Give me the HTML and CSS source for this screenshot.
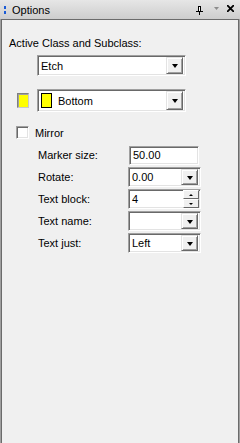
FILE: index.html
```html
<!DOCTYPE html>
<html>
<head lang="en">
    <meta charset="utf-8">
    <title>Options</title>
    <link rel="stylesheet" href="styles.css">
</head>
<body>
<div class="panel">
    <div class="titlebar">
        <span class="grip"><i></i><i></i></span>
        <span class="title">Options</span>
        <span class="tools">
            <svg width="7" height="9" viewBox="0 0 7 9"><path d="M2 0h3v5H2zM0 5h7v1H0zM3 6h1v3H3z" fill="#000"/><path d="M3 1h1v4H3z" fill="#fff"/></svg>
            <svg width="5" height="3" viewBox="0 0 5 3"><path d="M0 0h5L2.5 3z" fill="#8c8c8c"/></svg>
            <svg width="7" height="7" viewBox="0 0 7 7"><path d="M0 0l7 7M7 0L0 7" stroke="#000" stroke-width="1.8"/></svg>
        </span>
    </div>
    <div class="frame">
        <div class="content">
            <div class="heading">Active Class and Subclass:</div>

            <div class="combo class-combo">
                <span class="value">Etch</span>
                <span class="dropbtn"><b></b></span>
            </div>

            <div class="subclass-row">
                <span class="swatch-btn"><span></span></span>
                <div class="combo subclass-combo">
                    <span class="chip"></span>
                    <span class="value">Bottom</span>
                    <span class="dropbtn"><b></b></span>
                </div>
            </div>

            <label class="check-row">
                <span class="checkbox"></span>
                <span>Mirror</span>
            </label>

            <div class="fields">
                <span class="lbl">Marker size:</span>
                <div class="edit marker"><span class="value">50.00</span></div>

                <span class="lbl">Rotate:</span>
                <div class="combo small"><span class="value">0.00</span><span class="dropbtn"><b></b></span></div>

                <span class="lbl">Text block:</span>
                <div class="combo small spin">
                    <span class="value">4</span>
                    <span class="spinbtns"><span class="up"><b></b></span><span class="down"><b></b></span></span>
                </div>

                <span class="lbl">Text name:</span>
                <div class="combo small"><span class="value"></span><span class="dropbtn"><b></b></span></div>

                <span class="lbl">Text just:</span>
                <div class="combo small"><span class="value">Left</span><span class="dropbtn"><b></b></span></div>
            </div>
        </div>
    </div>
</div>
</body>
</html>
```

FILE: styles.css
```css
html, body {
    margin: 0;
    padding: 0;
}

body {
    width: 240px;
    height: 443px;
    overflow: hidden;
    background: #f0f0f0;
    font-family: "Liberation Sans", Arial, sans-serif;
    font-size: 11px;
    color: #000;
}

.panel {
    display: flex;
    flex-direction: column;
    height: 443px;
}

.titlebar {
    height: 19px;
    display: flex;
    align-items: center;
    background: linear-gradient(#e6e6e6, #cdcdcd);
    flex-shrink: 0;
}

.grip {
    display: flex;
    flex-direction: column;
    gap: 2px;
    margin-left: 4px;
    width: 2px;
}

.grip i {
    display: block;
    width: 2px;
    height: 3px;
    background: #1a5bd6;
}

.title {
    margin-left: 6px;
    font-size: 11px;
    flex: 1;
}

.tools {
    display: flex;
    align-items: center;
    margin-right: 6px;
}

.tools svg:nth-child(1) {
    margin-right: 11px;
    margin-top: 2px;
}

.tools svg:nth-child(2) {
    margin-right: 8px;
    margin-top: -3px;
}

.tools svg:nth-child(3) {
    margin-top: -3px;
}

.frame {
    flex: 1;
    border-left: 1px solid #a0a0a0;
    border-right: 1px solid #a0a0a0;
    display: flex;
}

.content {
    flex: 1;
    border: 1px solid #6b6b6b;
    border-bottom: none;
    padding: 17px 0 0 7px;
    background: #f0f0f0;
}

.heading {
    line-height: 13px;
}

/* sunken field */
.combo, .edit {
    box-sizing: border-box;
    display: flex;
    align-items: center;
    background: #fff;
    border: 1px solid;
    border-color: #a0a0a0 #fff #fff #a0a0a0;
    box-shadow: inset 1px 1px #696969, inset -1px -1px #e3e3e3;
}

.combo .value, .edit .value {
    flex: 1;
    padding-left: 3px;
    white-space: nowrap;
}

.dropbtn {
    box-sizing: border-box;
    width: 17px;
    height: 17px;
    margin-right: 2px;
    background: #f0f0f0;
    border: 1px solid;
    border-color: #e3e3e3 #696969 #696969 #e3e3e3;
    box-shadow: inset 1px 1px #fff, inset -1px -1px #a0a0a0;
    display: flex;
    align-items: center;
    justify-content: center;
}

.dropbtn b {
    width: 0;
    height: 0;
    border-left: 3.5px solid transparent;
    border-right: 3.5px solid transparent;
    border-top: 4px solid #000;
    margin-top: 1px;
}

.class-combo {
    width: 149px;
    height: 21px;
    margin: 5px 0 0 28px;
}

.subclass-row {
    display: flex;
    align-items: center;
    margin-top: 13px;
}

.swatch-btn {
    box-sizing: border-box;
    width: 12px;
    height: 15px;
    margin-left: 8px;
    margin-right: 8px;
    border: 1px solid;
    border-color: #808080 #c8c8c8 #c8c8c8 #808080;
    background: #a0a0a0;
    padding: 1px 0 0 1px;
    display: flex;
}

.swatch-btn span {
    flex: 1;
    background: #ffff00;
}

.subclass-combo {
    width: 149px;
    height: 23px;
}

.subclass-combo .chip {
    width: 9px;
    height: 13px;
    margin-left: 3px;
    border: 1px solid #000;
    background: #ffff00;
    flex-shrink: 0;
}

.subclass-combo .value {
    padding-left: 6px;
}

.subclass-combo .dropbtn {
    height: 19px;
}

.check-row {
    display: flex;
    align-items: center;
    margin: 14px 0 0 7px;
    gap: 6px;
}

.checkbox {
    box-sizing: border-box;
    width: 13px;
    height: 13px;
    background: #fff;
    border: 1px solid;
    border-color: #a0a0a0 #fff #fff #a0a0a0;
    box-shadow: inset 1px 1px #696969, inset -1px -1px #e3e3e3;
}

.fields {
    display: grid;
    grid-template-columns: 90px 73px;
    grid-auto-rows: 20px;
    row-gap: 2px;
    align-items: center;
    margin: 6px 0 0 29px;
}

.combo.small {
    height: 20px;
}

.combo.small .dropbtn {
    height: 16px;
}

.edit.marker {
    width: 70px;
    height: 19px;
    margin-left: 1px;
}

.spinbtns {
    display: flex;
    flex-direction: column;
    width: 16px;
    margin-right: 1px;
}

.spinbtns span {
    box-sizing: border-box;
    height: 9px;
    background: #f0f0f0;
    border: 1px solid;
    border-color: #fff #696969 #696969 #fff;
    display: flex;
    align-items: center;
    justify-content: center;
}

.spinbtns .up b {
    border-left: 2px solid transparent;
    border-right: 2px solid transparent;
    border-bottom: 2px solid #000;
}

.spinbtns .down b {
    border-left: 2px solid transparent;
    border-right: 2px solid transparent;
    border-top: 2px solid #000;
}
```
